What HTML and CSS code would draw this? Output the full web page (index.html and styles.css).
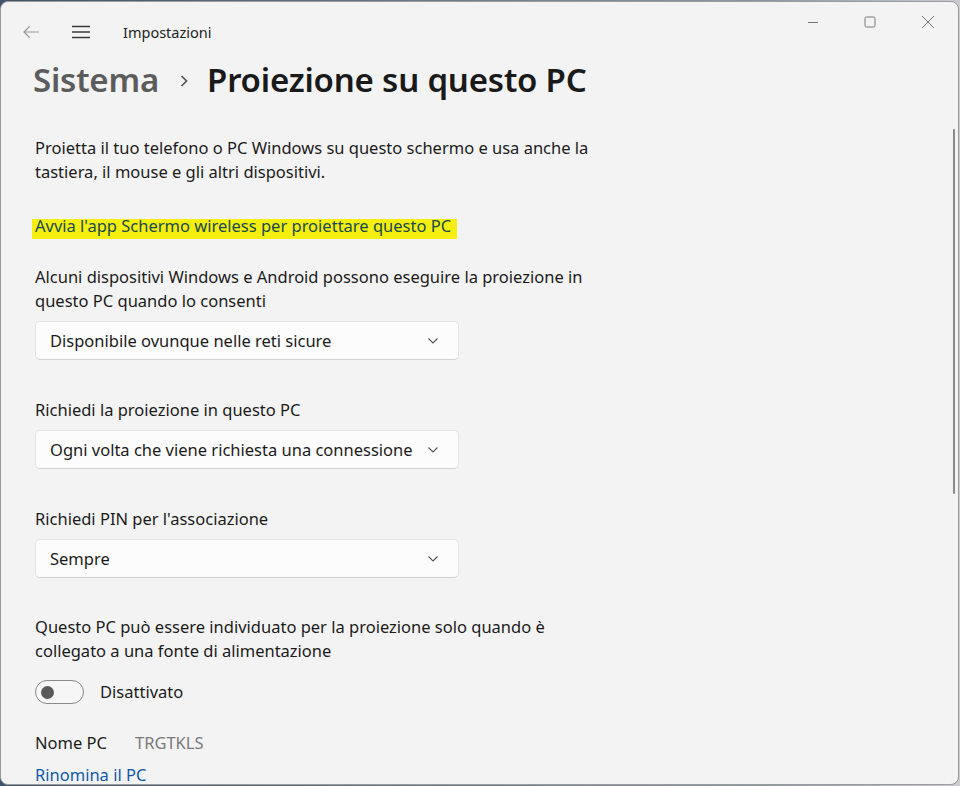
FILE: index.html
```html
<!DOCTYPE html>
<html lang="it">

<head>
  <meta charset="UTF-8" />
  <meta name="viewport" content="width=device-width, initial-scale=1.0" />
  <title>Impostazioni</title>
  <link rel="stylesheet" href="styles.css">
</head>

<body>
  <div class="window">
    <div class="titlebar">
      <button class="tb-btn back" aria-label="Indietro">
        <svg width="18" height="14" viewBox="0 0 18 14"><path d="M17 7H2M7.5 1.5 2 7l5.5 5.5" fill="none" stroke="#9a9a9a" stroke-width="1.2"/></svg>
      </button>
      <button class="tb-btn menu" aria-label="Menu">
        <svg width="20" height="14" viewBox="0 0 20 14"><path d="M1 1.5h18M1 7h18M1 12.5h18" stroke="#3a3a3a" stroke-width="1.4"/></svg>
      </button>
      <span class="app-title">Impostazioni</span>

      <div class="caption-btns">
        <span class="cap-btn">
          <svg width="12" height="12" viewBox="0 0 12 12"><path d="M1 6.5h10" stroke="#777" stroke-width="1"/></svg>
        </span>
        <span class="cap-btn">
          <svg width="12" height="12" viewBox="0 0 12 12"><rect x="1" y="1" width="10" height="10" rx="1.5" fill="none" stroke="#777" stroke-width="1"/></svg>
        </span>
        <span class="cap-btn">
          <svg width="14" height="14" viewBox="0 0 14 14"><path d="M1 1l12 12M13 1 1 13" stroke="#777" stroke-width="1"/></svg>
        </span>
      </div>
    </div>

    <h1 class="breadcrumb">
      <span class="crumb-parent">Sistema</span>
      <span class="crumb-sep">
        <svg width="10" height="14" viewBox="0 0 10 14"><path d="M2.5 2 7.5 7l-5 5" fill="none" stroke="#555" stroke-width="1.7"/></svg>
      </span>
      <span class="crumb-current">Proiezione su questo PC</span>
    </h1>

    <div class="content">
      <p class="intro">Proietta il tuo telefono o PC Windows su questo schermo e usa anche la tastiera, il mouse e gli altri dispositivi.</p>

      <a class="link highlight" href="#">Avvia l'app Schermo wireless per proiettare questo PC</a>

      <div class="setting">
        <p class="label">Alcuni dispositivi Windows e Android possono eseguire la proiezione in questo PC quando lo consenti</p>
        <div class="combo">
          <span>Disponibile ovunque nelle reti sicure</span>
          <svg width="12" height="8" viewBox="0 0 12 8"><path d="M1.5 1.5 6 6l4.5-4.5" fill="none" stroke="#555" stroke-width="1.1"/></svg>
        </div>
      </div>

      <div class="setting">
        <p class="label">Richiedi la proiezione in questo PC</p>
        <div class="combo">
          <span>Ogni volta che viene richiesta una connessione</span>
          <svg width="12" height="8" viewBox="0 0 12 8"><path d="M1.5 1.5 6 6l4.5-4.5" fill="none" stroke="#555" stroke-width="1.1"/></svg>
        </div>
      </div>

      <div class="setting">
        <p class="label">Richiedi PIN per l'associazione</p>
        <div class="combo">
          <span>Sempre</span>
          <svg width="12" height="8" viewBox="0 0 12 8"><path d="M1.5 1.5 6 6l4.5-4.5" fill="none" stroke="#555" stroke-width="1.1"/></svg>
        </div>
      </div>

      <div class="setting power">
        <p class="label">Questo PC può essere individuato per la proiezione solo quando è collegato a una fonte di alimentazione</p>
        <div class="toggle-row">
          <span class="toggle"><span class="knob"></span></span>
          <span>Disattivato</span>
        </div>
      </div>

      <div class="pc-name">
        <span>Nome PC</span>
        <span class="pc-value">TRGTKLS</span>
      </div>
      <a class="link" href="#">Rinomina il PC</a>
    </div>

    <div class="scrollbar"></div>
  </div>
</body>

</html>
```

FILE: styles.css
```css
* {
  margin: 0;
  padding: 0;
  box-sizing: border-box;
  font-family: 'Segoe UI', 'Noto Sans', sans-serif;
}

html,
body {
  height: 100%;
  overflow: hidden;
}

body {
  background: linear-gradient(90deg, #40546a 0%, #8d97a2 80%, #c9ccd0 100%);
  padding: 1px 1px 1px 0;
}

.window {
  position: relative;
  height: 100%;
  background: #f3f3f3;
  border: 1px solid #9b9b9b;
  border-radius: 8px;
  overflow: hidden;
  color: #1b1b1b;
}

/* barra del titolo */
.titlebar {
  display: flex;
  align-items: center;
  height: 60px;
  padding-left: 10px;
}

.tb-btn {
  display: flex;
  align-items: center;
  justify-content: center;
  width: 40px;
  height: 36px;
  border: none;
  background: none;
}

.menu {
  margin-left: 10px;
}

.app-title {
  margin-left: 22px;
  font-size: 14.5px;
  color: #1f1f1f;
}

.caption-btns {
  display: flex;
  margin-left: auto;
  align-self: flex-start;
}

.cap-btn {
  display: flex;
  align-items: center;
  justify-content: center;
  width: 57px;
  height: 40px;
}

.cap-btn:last-child {
  width: 60px;
}

/* intestazione */
.breadcrumb {
  display: flex;
  align-items: center;
  padding-left: 32px;
  margin-top: -4px;
  font-size: 33px;
  font-weight: 600;
  line-height: 44px;
  letter-spacing: -0.2px;
}

.crumb-parent {
  color: #5c5c5c;
}

.crumb-sep {
  display: flex;
  margin: 2px 18px 0 20px;
}

.crumb-current {
  color: #1a1a1a;
}

/* contenuto */
.content {
  padding: 34px 0 0 34px;
  font-size: 16.5px;
  line-height: 24px;
}

.intro {
  max-width: 570px;
}

.link {
  display: inline-block;
  color: #0e4f8c;
  text-decoration: none;
}

.highlight {
  margin-top: 30px;
  color: #1b4a4e;
  background: linear-gradient(to bottom, transparent 20%, #f4ef10 20%, #f4ef10 95%, transparent 95%);
  padding: 0 6px 2px 3px;
  margin-left: -3px;
}

.setting {
  margin-top: 25px;
}

.setting + .setting {
  margin-top: 38px;
}

.setting.power {
  margin-top: 37px;
}

.label {
  max-width: 570px;
}

.combo {
  display: flex;
  align-items: center;
  justify-content: space-between;
  width: 424px;
  height: 39px;
  margin-top: 8px;
  padding: 0 19px 0 14px;
  background: #fcfcfc;
  border: 1px solid #e4e4e4;
  border-bottom-color: #d2d2d2;
  border-radius: 5px;
}

.toggle-row {
  display: flex;
  align-items: center;
  gap: 16px;
  margin-top: 17px;
}

.toggle {
  display: flex;
  align-items: center;
  width: 49px;
  height: 24px;
  padding-left: 5px;
  border: 1px solid #8a8a8a;
  border-radius: 12px;
  background: #f6f6f6;
}

.knob {
  width: 13px;
  height: 13px;
  border-radius: 50%;
  background: #5a5a5a;
}

.pc-name {
  display: flex;
  gap: 28px;
  margin-top: 27px;
}

.pc-value {
  color: #7a7a7a;
}

.pc-name + .link {
  margin-top: 8px;
  color: #0f5aa6;
}

.scrollbar {
  position: absolute;
  top: 127px;
  right: 3px;
  width: 2px;
  height: 365px;
  border-radius: 1px;
  background: #8a8a8a;
}
```
